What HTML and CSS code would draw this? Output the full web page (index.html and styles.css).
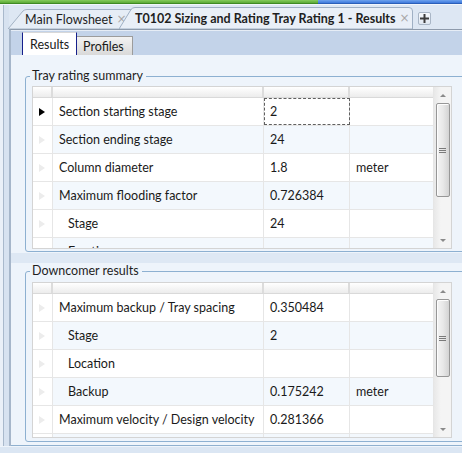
FILE: index.html
```html
<!DOCTYPE html>
<html>
<head>
<meta charset="utf-8">
<link rel="stylesheet" href="styles.css">
</head>
<body>
<div class="topbar"><div class="tb-green"></div><div class="tb-blue"></div></div>
<div class="frame">
  <div class="leftedge"></div>
  <div class="main">
    <div class="doctabs">
      <div class="dtab dtab-inactive">
        <svg class="dtab-shape" width="125" height="20" viewBox="0 0 125 20"><path d="M0 20 L15 2 Q16.5 0.5 19 0.5 L125 0.5 L125 20 Z" fill="#e6edf6" stroke="#a3b2c4" stroke-width="1"/></svg>
        <span class="dtab-label">Main Flowsheet</span><span class="dtab-x">×</span>
      </div>
      <div class="dtab dtab-active">
        <svg class="dtab-shape" width="294" height="22" viewBox="0 0 294 22"><path d="M0 22 L12 2.5 Q13.5 0.5 16 0.5 L290 0.5 Q293.5 0.5 293.5 4 L293.5 22 Z" fill="#e9eff7" stroke="#9fb0c4" stroke-width="1"/></svg>
        <span class="dtab-label dtab-bold">T0102 Sizing and Rating Tray Rating 1 - Results</span><span class="dtab-x">×</span>
      </div>
      <div class="plus"><svg width="11" height="11" viewBox="0 0 11 11"><path d="M5.5 1 V10 M1 5.5 H10" stroke="#3c3c3c" stroke-width="2"/></svg></div>
    </div>
    <div class="doc">
      <div class="subtabs">
        <div class="stab stab-active">Results</div>
        <div class="stab">Profiles</div>
      </div>
      <div class="content">
        <div class="panel panel-1">
          <fieldset class="group">
            <legend>Tray rating summary</legend>
            <div class="grid grid-1">
              <div class="grid-body">
                <div class="row row-head"><div class="c c-rh"></div><div class="c c-name"></div><div class="c c-val"></div><div class="c c-unit"></div></div>
                <div class="row"><div class="c c-rh"><span class="arrow arrow-on"></span></div><div class="c c-name">Section starting stage</div><div class="c c-val c-focus">2</div><div class="c c-unit"></div></div>
                <div class="row row-alt"><div class="c c-rh"><span class="arrow"></span></div><div class="c c-name">Section ending stage</div><div class="c c-val">24</div><div class="c c-unit"></div></div>
                <div class="row"><div class="c c-rh"><span class="arrow"></span></div><div class="c c-name">Column diameter</div><div class="c c-val">1.8</div><div class="c c-unit">meter</div></div>
                <div class="row row-alt"><div class="c c-rh"><span class="arrow"></span></div><div class="c c-name">Maximum flooding factor</div><div class="c c-val">0.726384</div><div class="c c-unit"></div></div>
                <div class="row"><div class="c c-rh"><span class="arrow"></span></div><div class="c c-name c-ind">Stage</div><div class="c c-val">24</div><div class="c c-unit"></div></div>
                <div class="row row-alt"><div class="c c-rh"><span class="arrow"></span></div><div class="c c-name c-ind">Fraction</div><div class="c c-val"></div><div class="c c-unit"></div></div>
              </div>
              <div class="sbar">
                <div class="sb-up"></div>
                <div class="sb-thumb sb-thumb-1"><div class="grip"></div></div>
                <div class="sb-fill"></div>
                <div class="sb-down"></div>
              </div>
            </div>
          </fieldset>
        </div>
        <div class="splitter"></div>
        <div class="panel panel-2">
          <fieldset class="group">
            <legend>Downcomer results</legend>
            <div class="grid grid-2">
              <div class="grid-body">
                <div class="row row-head"><div class="c c-rh"></div><div class="c c-name"></div><div class="c c-val"></div><div class="c c-unit"></div></div>
                <div class="row"><div class="c c-rh"><span class="arrow"></span></div><div class="c c-name">Maximum backup / Tray spacing</div><div class="c c-val">0.350484</div><div class="c c-unit"></div></div>
                <div class="row row-alt"><div class="c c-rh"><span class="arrow"></span></div><div class="c c-name c-ind">Stage</div><div class="c c-val">2</div><div class="c c-unit"></div></div>
                <div class="row"><div class="c c-rh"><span class="arrow"></span></div><div class="c c-name c-ind">Location</div><div class="c c-val"></div><div class="c c-unit"></div></div>
                <div class="row row-alt"><div class="c c-rh"><span class="arrow"></span></div><div class="c c-name c-ind">Backup</div><div class="c c-val">0.175242</div><div class="c c-unit">meter</div></div>
                <div class="row"><div class="c c-rh"><span class="arrow"></span></div><div class="c c-name">Maximum velocity / Design velocity</div><div class="c c-val">0.281366</div><div class="c c-unit"></div></div>
                <div class="row row-alt"><div class="c c-rh"><span class="arrow"></span></div><div class="c c-name c-ind"></div><div class="c c-val"></div><div class="c c-unit"></div></div>
              </div>
              <div class="sbar">
                <div class="sb-up"></div>
                <div class="sb-thumb sb-thumb-2"><div class="grip"></div></div>
                <div class="sb-fill"></div>
                <div class="sb-down"></div>
              </div>
            </div>
          </fieldset>
        </div>
      </div>
    </div>
  </div>
</div>
<div class="bottom"></div>
</body>
</html>
```
FILE: styles.css
```css
html, body {
  margin: 0;
  padding: 0;
  width: 462px;
  height: 453px;
  overflow: hidden;
  background: #dde7f3;
  font-family: Lato, "Liberation Sans", sans-serif;
  font-size: 12.5px;
  color: #1a1a1a;
}

.topbar {
  display: flex;
  height: 4px;
  border-bottom: 1px solid #f2f6fb;
}
.tb-green {
  width: 318px;
  background: linear-gradient(#86cc5c, #5aa936);
  border-bottom: 1px solid #3f8a24;
}
.tb-blue {
  flex: 1;
  background: linear-gradient(#6ea3ee, #3d78dc);
  border-bottom: 1px solid #2b5fb8;
}

.frame {
  display: flex;
  height: 441px;
}
.leftedge {
  width: 9px;
  flex: none;
  background: linear-gradient(90deg, #eaf0f8 0, #eaf0f8 3px, #a9b9cc 3px, #a9b9cc 4px, #d7e2f0 4px);
}
.main {
  flex: 1;
  display: flex;
  flex-direction: column;
  min-width: 0;
}

.doctabs {
  height: 24px;
  display: flex;
  align-items: flex-end;
  margin-left: -1px;
}
.dtab {
  position: relative;
  display: flex;
  align-items: center;
  flex: none;
}
.dtab-shape {
  position: absolute;
  left: 0;
  bottom: 0;
}
.dtab-label, .dtab-x {
  position: relative;
}
.dtab-inactive {
  width: 125px;
  height: 20px;
  padding-left: 17px;
  box-sizing: border-box;
}
.dtab-active {
  width: 294px;
  height: 22px;
  margin-left: -14px;
  padding-left: 16px;
  box-sizing: border-box;
}
.dtab-label {
  font-size: 12.5px;
  color: #1e1e1e;
  white-space: nowrap;
}
.dtab-bold {
  font-weight: bold;
}
.dtab-x {
  color: #a8a8a8;
  font-family: "DejaVu Sans", sans-serif;
  font-size: 12px;
  margin-left: 4px;
}
.plus {
  width: 11px;
  height: 11px;
  margin-left: 5px;
  margin-bottom: 4px;
  border: 1px solid #a9b6c6;
  border-radius: 2px;
  background: linear-gradient(#f6f9fc, #dfe7f1);
  display: flex;
  align-items: center;
  justify-content: center;
}

.doc {
  flex: 1;
  display: flex;
  flex-direction: column;
  border-top: 1px solid #8d9aab;
  border-left: 2px solid #a6b6ca;
  min-height: 0;
}
.subtabs {
  height: 24px;
  flex: none;
  border-top: 1px solid #e6edf6;
  background: #c3d3e9;
  display: flex;
  align-items: flex-end;
  padding-left: 11px;
  box-sizing: border-box;
  height: 25px;
}
.stab {
  height: 19px;
  padding: 0 6px 0 6px;
  display: flex;
  align-items: center;
  box-sizing: border-box;
  background: linear-gradient(#f3f3f3, #d9d9d9);
  border: 1px solid #9c9c9c;
  border-bottom: none;
}
.stab-active {
  height: 23px;
  width: 55px;
  padding-left: 7px;
  background: #ffffff;
  border-top: 1px solid #d8d8d8;
  border-left: 1px solid #16208c;
  border-right: 1px solid #16208c;
}
.stab:not(.stab-active) {
  width: 56px;
  border-left: none;
}

.content {
  flex: 1;
  background: #eef4fb;
  display: flex;
  flex-direction: column;
  border-bottom: 1px solid #8fb0cf;
  min-height: 0;
}
.panel {
  padding-left: 14px;
  flex: none;
}
.panel-1 {
  padding-top: 13px;
}
.splitter {
  height: 10px;
  flex: none;
  background: #dee8f4;
  border-top: 1px solid #eef4fb;
}

.group {
  margin: 0;
  border: 1px solid #8db0d1;
  border-radius: 3px;
  padding: 2px 6px 2px 6px;
  width: 460px;
  box-sizing: border-box;
}
.panel-2 .group {
  padding-top: 3px;
  padding-bottom: 3px;
}
.group legend {
  padding: 0 3px 0 2px;
  margin-left: -2px;
  line-height: 16px;
  font-size: 12.5px;
  color: #1e1e1e;
}

.grid {
  display: flex;
  width: 420px;
  border: 1px solid #d4d4d4;
  box-sizing: border-box;
  background: #ffffff;
  overflow: hidden;
}
.grid-1 { height: 163px; }
.grid-2 { height: 156px; }
.grid-body {
  flex: 1;
  display: flex;
  flex-direction: column;
  overflow: hidden;
}
.row {
  display: grid;
  grid-template-columns: 20px 211px 86px 85px;
  height: 28px;
  flex: none;
  border-bottom: 1px solid #e6e6e6;
  box-sizing: border-box;
}
.row-alt .c:not(.c-rh) {
  background: #f3f8fd;
}
.row-head {
  height: 11px;
  border-bottom: 1px solid #d9d9d9;
}
.row-head .c {
  background: linear-gradient(#ffffff, #ececec);
  border-right: 2px solid #dcdcdc;
}
.c {
  display: flex;
  align-items: center;
  border-right: 1px solid #e6e6e6;
  white-space: nowrap;
  overflow: hidden;
  padding-left: 6px;
  box-sizing: border-box;
}
.c-rh {
  padding-left: 6px;
  background: #ffffff;
}
.c-ind {
  padding-left: 15px;
}
.c-unit {
  border-right: none;
}
.c-focus {
  outline: 1px dashed #606060;
  outline-offset: -1px;
}
.arrow {
  width: 0;
  height: 0;
  border-top: 4px solid transparent;
  border-bottom: 4px solid transparent;
  border-left: 6px solid #ececec;
}
.arrow-on {
  border-left-color: #000000;
}

.sbar {
  width: 17px;
  flex: none;
  display: flex;
  flex-direction: column;
  align-items: center;
  background: linear-gradient(90deg, #e8e8e8, #f4f4f4 40%, #f4f4f4);
  border-left: 1px solid #e6e6e6;
}
.sb-up, .sb-down {
  height: 16px;
  width: 100%;
  flex: none;
  display: flex;
  align-items: center;
  justify-content: center;
}
.sb-up::before {
  content: "";
  border-left: 3px solid transparent;
  border-right: 3px solid transparent;
  border-bottom: 3px solid #8a8a8a;
}
.sb-down::before {
  content: "";
  border-left: 3px solid transparent;
  border-right: 3px solid transparent;
  border-top: 3px solid #8a8a8a;
}
.sb-thumb {
  width: 14px;
  flex: none;
  box-sizing: border-box;
  border: 1px solid #979797;
  border-radius: 2px;
  background: linear-gradient(90deg, #f4f4f4, #e8e8e8 50%, #d3d3d3);
  box-shadow: inset 1px 1px 0 #fdfdfd;
  display: flex;
  align-items: center;
  justify-content: center;
}
.sb-thumb-1 { height: 94px; }
.sb-thumb-2 { height: 78px; }
.grip {
  width: 7px;
  height: 5px;
  background: linear-gradient(#7a7a7a 0, #7a7a7a 1px, transparent 1px, transparent 2px, #7a7a7a 2px, #7a7a7a 3px, transparent 3px, transparent 4px, #7a7a7a 4px, #7a7a7a 5px);
}
.sb-fill {
  flex: 1;
}

.bottom {
  height: 6px;
  background: #dbe6f3;
  border-top: 1px solid #eef4fb;
}
```
